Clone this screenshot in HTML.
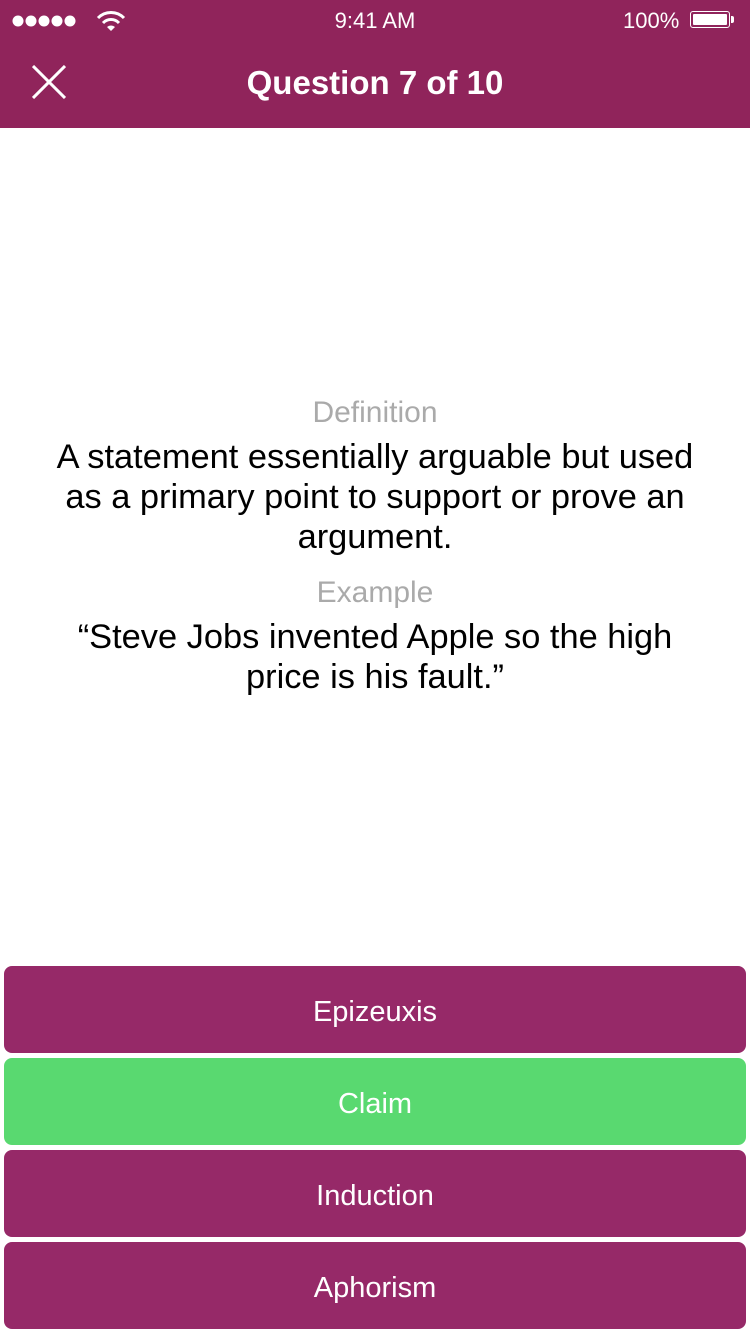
<!DOCTYPE html>
<html><head><style>
body{margin:0;width:750px;height:1334px;background:#fff;font-family:"Liberation Sans",sans-serif;position:relative;overflow:hidden}
.hdr{position:absolute;left:0;top:0;width:750px;height:128px;background:#90245b}
.t{position:absolute;color:#fff;white-space:nowrap}
.c{position:absolute;left:0;width:750px;text-align:center;white-space:nowrap}
.btn{position:absolute;left:4px;width:742px;height:87px;border-radius:8px;background:#962968;color:#fff;font-size:29px;line-height:93px;text-align:center}
</style></head><body>
<div class="hdr">
<svg style="position:absolute;left:12px;top:13px" width="70" height="16"><circle cx="6" cy="8" r="5.5" fill="#fff"/><circle cx="19" cy="8" r="5.5" fill="#fff"/><circle cx="32" cy="8" r="5.5" fill="#fff"/><circle cx="45" cy="8" r="5.5" fill="#fff"/><circle cx="58" cy="8" r="5.5" fill="#fff"/></svg>
<svg style="position:absolute;left:96px;top:10px" width="30" height="22" viewBox="0 0 30 22"><path d="M2 8 A18 18 0 0 1 28 8" stroke="#fff" stroke-width="3" fill="none"/><path d="M7 13 A11 11 0 0 1 23 13" stroke="#fff" stroke-width="3" fill="none"/><path d="M11 17 L15 21 L19 17 A6 6 0 0 0 11 17Z" fill="#fff"/></svg>
<div class="t" style="left:0;width:750px;text-align:center;top:8px;font-size:22px">9:41 AM</div>
<div class="t" style="left:623px;top:8px;font-size:22px">100%</div>
<div style="position:absolute;left:690px;top:11px;width:40px;height:17px;border:1.5px solid #fff;border-radius:3px;box-sizing:border-box;padding:2px"><div style="background:#fff;width:100%;height:100%;border-radius:1px"></div></div>
<div style="position:absolute;left:731px;top:16px;width:3px;height:7px;background:#fff;border-radius:0 2px 2px 0"></div>
<svg style="position:absolute;left:32px;top:65px" width="34" height="34"><path d="M1 1L33 33M33 1L1 33" stroke="#fff" stroke-width="3"/></svg>
<div class="t" style="left:0;width:750px;text-align:center;top:64px;font-size:33px;font-weight:bold">Question 7 of 10</div>
</div>
<div class="c" style="top:396px;font-size:30px;color:#aaa">Definition</div>
<div class="c" style="top:437px;font-size:34.4px;line-height:40px;color:#000">A statement essentially arguable but used<br>as a primary point to support or prove an<br>argument.</div>
<div class="c" style="top:576px;font-size:30px;color:#aaa">Example</div>
<div class="c" style="top:617px;font-size:34.4px;line-height:40px;color:#000">“Steve Jobs invented Apple so the high<br>price is his fault.”</div>
<div class="btn" style="top:966px">Epizeuxis</div>
<div class="btn" style="top:1058px;background:#59d970">Claim</div>
<div class="btn" style="top:1150px">Induction</div>
<div class="btn" style="top:1242px">Aphorism</div>
</body></html>
